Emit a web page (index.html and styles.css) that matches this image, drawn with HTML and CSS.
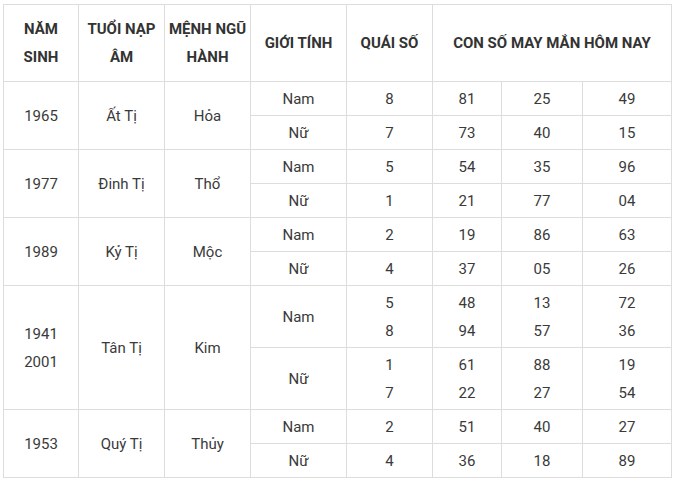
FILE: index.html
```html
<!DOCTYPE html>
<html lang="vi">
<head>
<meta charset="utf-8">
<title>Con số may mắn</title>
<link rel="stylesheet" href="styles.css">
</head>
<body>
<table class="lucky">
  <colgroup>
    <col class="c1"><col class="c2"><col class="c3"><col class="c4"><col class="c5"><col class="c6"><col class="c7"><col class="c8">
  </colgroup>
  <thead>
    <tr>
      <th>NĂM<br>SINH</th>
      <th>TUỔI NẠP<br>ÂM</th>
      <th>MỆNH NGŨ<br>HÀNH</th>
      <th>GIỚI TÍNH</th>
      <th>QUÁI SỐ</th>
      <th colspan="3">CON SỐ MAY MẮN HÔM NAY</th>
    </tr>
  </thead>
  <tbody>
    <tr><td rowspan="2">1965</td><td rowspan="2">Ất Tị</td><td rowspan="2">Hỏa</td><td>Nam</td><td>8</td><td>81</td><td>25</td><td>49</td></tr>
    <tr><td>Nữ</td><td>7</td><td>73</td><td>40</td><td>15</td></tr>
    <tr><td rowspan="2">1977</td><td rowspan="2">Đinh Tị</td><td rowspan="2">Thổ</td><td>Nam</td><td>5</td><td>54</td><td>35</td><td>96</td></tr>
    <tr><td>Nữ</td><td>1</td><td>21</td><td>77</td><td>04</td></tr>
    <tr><td rowspan="2">1989</td><td rowspan="2">Kỷ Tị</td><td rowspan="2">Mộc</td><td>Nam</td><td>2</td><td>19</td><td>86</td><td>63</td></tr>
    <tr><td>Nữ</td><td>4</td><td>37</td><td>05</td><td>26</td></tr>
    <tr><td rowspan="2">1941<br>2001</td><td rowspan="2">Tân Tị</td><td rowspan="2">Kim</td><td>Nam</td><td>5<br>8</td><td>48<br>94</td><td>13<br>57</td><td>72<br>36</td></tr>
    <tr><td>Nữ</td><td>1<br>7</td><td>61<br>22</td><td>88<br>27</td><td>19<br>54</td></tr>
    <tr><td rowspan="2">1953</td><td rowspan="2">Quý Tị</td><td rowspan="2">Thủy</td><td>Nam</td><td>2</td><td>51</td><td>40</td><td>27</td></tr>
    <tr><td>Nữ</td><td>4</td><td>36</td><td>18</td><td>89</td></tr>
  </tbody>
</table>
</body>
</html>
```
FILE: styles.css
```css
html, body {
  margin: 0;
  padding: 0;
  background: #ffffff;
}

body {
  font-family: Roboto, "Liberation Sans", Arial, sans-serif;
  font-size: 15px;
  color: #333333;
}

.lucky {
  margin: 4px 0 0 3px;
  width: 668px;
  border-collapse: collapse;
  table-layout: fixed;
}

.c1 { width: 75px; }
.c2 { width: 86px; }
.c3 { width: 86px; }
.c4 { width: 96px; }
.c5 { width: 86px; }
.c6 { width: 69px; }
.c7 { width: 81px; }
.c8 { width: 89px; }

.lucky th,
.lucky td {
  border: 1px solid #dddddd;
  text-align: center;
  vertical-align: middle;
  line-height: 28px;
  padding: 3px 0 2px;
}

.lucky th {
  font-weight: 700;
  color: #333333;
  padding: 10px 0;
}

.lucky td {
  font-weight: 400;
  color: #3a3a3a;
}
```
